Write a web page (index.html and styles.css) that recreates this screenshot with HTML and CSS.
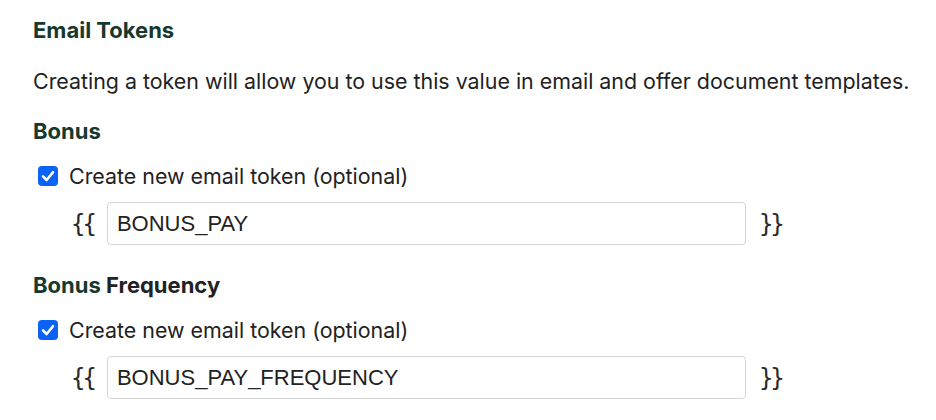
FILE: index.html
```html
<!DOCTYPE html>
<html>
<head>
<meta charset="utf-8">
<link rel="stylesheet" href="styles.css">
</head>
<body>
<div class="panel">
  <h2 class="title">Email Tokens</h2>
  <p class="desc">Creating a token will allow you to use this value in email and offer document templates.</p>

  <section class="field">
    <h3 class="field-name"><span class="green">Bonus</span></h3>
    <label class="check-row">
      <span class="checkbox"><svg viewBox="0 0 20 20" width="20" height="20"><rect x="0" y="0" width="20" height="20" rx="4" fill="#0b63f6"/><path d="M5 10.4 L8.6 14 L15 6.2" fill="none" stroke="#fff" stroke-width="2.6" stroke-linecap="round" stroke-linejoin="round"/></svg></span>
      <span class="check-label">Create new email token (optional)</span>
    </label>
    <div class="token-row">
      <span class="brace">{{</span>
      <div class="token-input">BONUS_PAY</div>
      <span class="brace">}}</span>
    </div>
  </section>

  <section class="field">
    <h3 class="field-name"><span class="green">Bonus</span> Frequency</h3>
    <label class="check-row">
      <span class="checkbox"><svg viewBox="0 0 20 20" width="20" height="20"><rect x="0" y="0" width="20" height="20" rx="4" fill="#0b63f6"/><path d="M5 10.4 L8.6 14 L15 6.2" fill="none" stroke="#fff" stroke-width="2.6" stroke-linecap="round" stroke-linejoin="round"/></svg></span>
      <span class="check-label">Create new email token (optional)</span>
    </label>
    <div class="token-row">
      <span class="brace">{{</span>
      <div class="token-input">BONUS_PAY_FREQUENCY</div>
      <span class="brace">}}</span>
    </div>
  </section>
</div>
</body>
</html>
```

FILE: styles.css
```css
* { box-sizing: border-box; }
html, body { margin: 0; padding: 0; background: #fff; }
body {
  font-family: Inter, "Liberation Sans", sans-serif;
  color: #222;
}
.panel {
  padding: 18px 0 0 33px;
}
.title {
  margin: 0;
  font-size: 22px;
  line-height: 24px;
  font-weight: 700;
  color: #17392d;
}
.desc {
  margin: 27px 0 0;
  font-size: 21.4px;
  line-height: 24px;
  color: #222;
}
.field-name {
  margin: 26px 0 0;
  font-size: 22px;
  line-height: 24px;
  font-weight: 700;
  color: #222;
}
.field + .field .field-name { margin-top: 28px; }
.green { color: #17392d; }
.check-row {
  display: flex;
  align-items: center;
  gap: 11px;
  margin: 21px 0 0 5px;
  height: 24px;
}
.checkbox { display: flex; width: 20px; height: 20px; }
.check-label { font-size: 21.4px; line-height: 24px; color: #222; }
.token-row {
  display: flex;
  align-items: center;
  margin: 14px 0 0 38px;
}
.brace {
  font-family: "DejaVu Sans Mono", monospace;
  font-size: 24px;
  letter-spacing: -3px;
  line-height: 28px;
  color: #2a2a2a;
}
.token-input {
  margin: 0 13px 0 13px;
  width: 639px;
  height: 43px;
  border: 1px solid #d6d6d6;
  border-radius: 4px;
  padding: 0 9px;
  display: flex;
  align-items: center;
  font-family: "Liberation Sans", Arial, sans-serif;
  font-size: 22px;
  color: #222;
}
```
